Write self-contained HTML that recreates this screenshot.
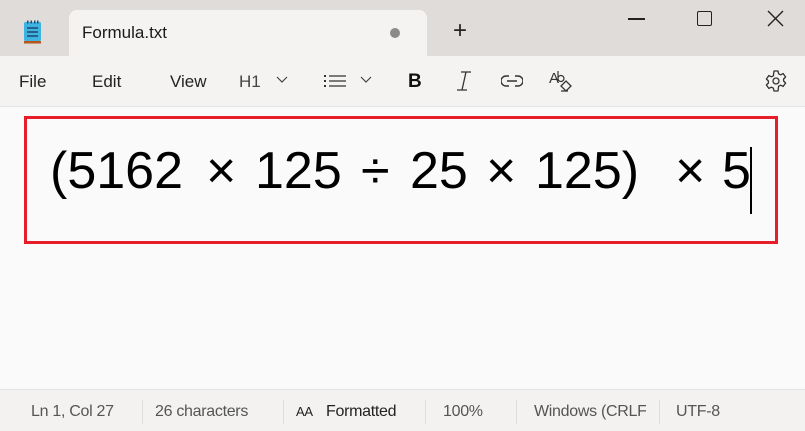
<!DOCTYPE html>
<html><head><style>
*{margin:0;padding:0;box-sizing:border-box}
body{width:805px;height:431px;overflow:hidden;background:#e0dcd9;font-family:"Liberation Sans",sans-serif;position:relative;color:#1a1a1a}
.abs{position:absolute}
.tab{left:69px;top:10px;width:358px;height:48px;background:#f5f3f1;border-radius:8px 8px 0 0}
.tb{left:0;top:56px;width:805px;height:50px;background:#f5f3f1}
.content{left:0;top:106px;width:805px;height:283px;background:#fafafa;border-top:1px solid #e6e4e2}
.status{left:0;top:389px;width:805px;height:42px;background:#f3f2f0;border-top:1px solid #e4e2e0;font-size:16px;color:#555}
.status span{white-space:nowrap;letter-spacing:-0.3px}
.sep{position:absolute;top:10px;width:1px;height:24px;background:#ddd}
.box{left:24px;top:116px;width:754px;height:128px;border:3px solid #e81d2a}
.t{position:absolute;top:141px;font-size:52px;color:#000;line-height:60px}
.m{font-size:17px;color:#222}
</style></head><body>
<div class="abs tab"></div>
<svg class="abs" style="left:22px;top:19px" width="22" height="26" viewBox="0 0 22 26">
<rect x="2" y="3" width="17" height="19" rx="1.5" fill="#3fb3e0"/>
<rect x="2" y="22" width="17" height="2.5" fill="#b5561d"/>
<g stroke="#1d4e7a" stroke-width="1.6"><line x1="5" y1="9" x2="16" y2="9"/><line x1="5" y1="13" x2="16" y2="13"/><line x1="5" y1="17" x2="16" y2="17"/></g>
<g fill="#1d4e7a"><rect x="5" y="1.5" width="1.5" height="3"/><rect x="8.5" y="1.5" width="1.5" height="3"/><rect x="12" y="1.5" width="1.5" height="3"/><rect x="15" y="1.5" width="1.5" height="3"/></g>
</svg>
<div class="abs" style="left:82px;top:23px;font-size:17px;color:#1a1a1a">Formula.txt</div>
<div class="abs" style="left:390px;top:28px;width:10px;height:10px;border-radius:50%;background:#8a8a8a"></div>
<div class="abs" style="left:453px;top:17px;font-size:24px;font-weight:300;color:#222">+</div>
<div class="abs" style="left:628px;top:18px;width:17px;height:1.5px;background:#222"></div>
<div class="abs" style="left:697px;top:11px;width:15px;height:15px;border:1.5px solid #222;border-radius:2px"></div>
<svg class="abs" style="left:767px;top:10px" width="17" height="17"><path d="M1 1L16 16M16 1L1 16" stroke="#222" stroke-width="1.4"/></svg>
<div class="abs tb"></div>
<div class="abs m" style="left:19px;top:72px">File</div>
<div class="abs m" style="left:92px;top:72px">Edit</div>
<div class="abs m" style="left:170px;top:72px">View</div>
<div class="abs m" style="left:239px;top:72px;color:#444">H1</div>
<svg class="abs" style="left:276px;top:76px" width="12" height="8"><path d="M1 1L6 6L11 1" stroke="#444" fill="none" stroke-width="1.2"/></svg>
<svg class="abs" style="left:324px;top:74px" width="22" height="14"><g fill="#333"><rect x="0" y="1" width="2" height="2"/><rect x="0" y="6" width="2" height="2"/><rect x="0" y="11" width="2" height="2"/></g><g stroke="#333" stroke-width="1.3"><line x1="5" y1="2" x2="22" y2="2"/><line x1="5" y1="7" x2="22" y2="7"/><line x1="5" y1="12" x2="22" y2="12"/></g></svg>
<svg class="abs" style="left:360px;top:76px" width="12" height="8"><path d="M1 1L6 6L11 1" stroke="#444" fill="none" stroke-width="1.2"/></svg>
<div class="abs" style="left:408px;top:71px;font-size:19px;font-weight:bold;color:#111">B</div>
<svg class="abs" style="left:455px;top:71px" width="18" height="20"><path d="M6 1H16M2 19H12M11 1L7 19" stroke="#333" stroke-width="1.3" fill="none"/></svg>
<svg class="abs" style="left:501px;top:74px" width="22" height="14"><path d="M8 2H5a5 5 0 0 0 0 10h3M14 2h3a5 5 0 0 1 0 10h-3M6 7h10" stroke="#333" stroke-width="1.4" fill="none"/></svg>
<div class="abs" style="left:549px;top:70px;font-size:15px;color:#333">A</div>
<svg class="abs" style="left:556px;top:70px" width="18" height="24"><path d="M2 1v10M2 8a3 3 0 1 1 0 1" stroke="#333" stroke-width="1.2" fill="none"/><path d="M5 16l5-5 5 5-5 5zM5 21h7" stroke="#333" stroke-width="1.3" fill="none"/></svg>
<svg class="abs" style="left:764px;top:69px" width="24" height="24" viewBox="0 0 24 24"><path d="M10 2h4l.6 2.8 2 1 2.6-1.2 2.4 3.4-2 2 0 2 2 2-2.4 3.4-2.6-1.2-2 1L14 22h-4l-.6-2.8-2-1-2.6 1.2-2.4-3.4 2-2v-2l-2-2 2.4-3.4 2.6 1.2 2-1z" stroke="#333" stroke-width="1.3" fill="none" stroke-linejoin="round"/><circle cx="12" cy="12" r="3" stroke="#333" stroke-width="1.3" fill="none"/></svg>
<div class="abs content"></div>
<div class="abs box"></div>
<span class="t" style="left:50px">(5162</span>
<span class="t" style="left:206px">×</span>
<span class="t" style="left:255px">125</span>
<span class="t" style="left:361px">÷</span>
<span class="t" style="left:410px">25</span>
<span class="t" style="left:486px">×</span>
<span class="t" style="left:535px">125)</span>
<span class="t" style="left:675px">×</span>
<span class="t" style="left:722px">5</span>
<div class="abs" style="left:750px;top:147px;width:1.5px;height:67px;background:#000"></div>
<div class="abs status">
<span class="abs" style="left:31px;top:13px">Ln 1, Col 27</span>
<div class="sep" style="left:142px"></div>
<span class="abs" style="left:155px;top:13px">26 characters</span>
<div class="sep" style="left:283px"></div>
<span class="abs" style="left:296px;top:14px;font-size:13px;color:#222">AA</span>
<span class="abs" style="left:326px;top:13px;color:#222;width:78px;overflow:hidden">Formatted</span>
<div class="sep" style="left:425px"></div>
<span class="abs" style="left:443px;top:13px">100%</span>
<div class="sep" style="left:516px"></div>
<span class="abs" style="left:534px;top:13px;width:112px;overflow:hidden">Windows (CRLF)</span>
<div class="sep" style="left:659px"></div>
<span class="abs" style="left:676px;top:13px">UTF-8</span>
</div>
</body></html>
